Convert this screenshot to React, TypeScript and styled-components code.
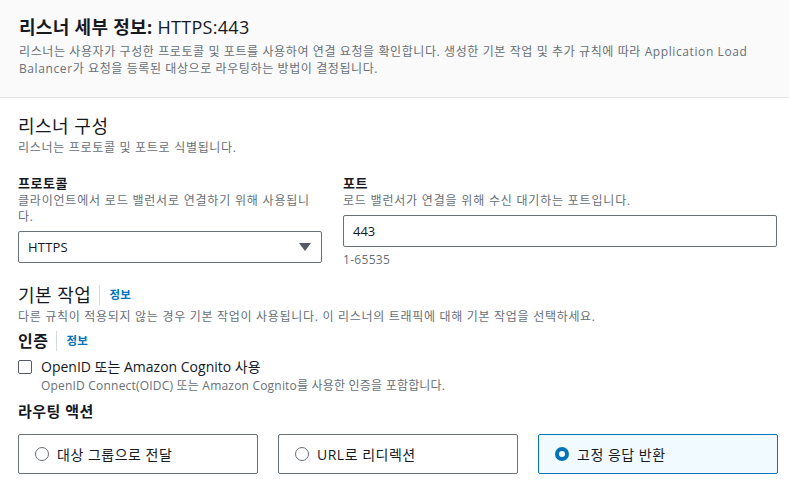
import React from "react";
import styled, { createGlobalStyle } from "styled-components";

const Global = createGlobalStyle`
  html, body { margin: 0; padding: 0; background: #ffffff; }
  body {
    font-family: "Open Sans", "Noto Sans CJK KR", "Noto Sans", sans-serif;
    color: #16191f;
    -webkit-font-smoothing: antialiased;
  }
  * { box-sizing: border-box; }
`;

const Page = styled.div`
  width: 789px;
  height: 492px;
  overflow: hidden;
  background: #ffffff;
`;

const Header = styled.header`
  background: #fafafa;
  border-bottom: 1px solid #e6e6e6;
  padding: 14px 28px 18px 19px;
  height: 98px;
`;

const Title = styled.h1`
  margin: 0;
  font-size: 18px;
  line-height: 26px;
  font-weight: 700;
  color: #16191f;
  letter-spacing: 0.3px;
  span { font-weight: 400; }
`;

const Desc = styled.p<{ $mt?: number; $ls?: number }>`
  margin: ${(p) => p.$mt ?? 0}px 0 0 0;
  font-size: 12px;
  line-height: 17px;
  letter-spacing: ${(p) => p.$ls ?? 0.7}px;
  color: #687078;
`;

const Body = styled.main`
  padding: 15px 11px 0 18px;
  display: flex;
  flex-direction: column;
`;

const SectionTitle = styled.h2<{ $bold?: boolean; $size?: number }>`
  margin: 0;
  font-size: ${(p) => p.$size ?? 18}px;
  line-height: 26px;
  font-weight: ${(p) => (p.$bold ? 700 : 400)};
  letter-spacing: 0.5px;
  color: #16191f;
  display: flex;
  align-items: center;
`;

const InfoLink = styled.a`
  display: inline-flex;
  align-items: center;
  margin-left: 8px;
  padding-left: 9px;
  border-left: 1px solid #d5dbdb;
  height: 20px;
  font-size: 11.5px;
  font-weight: 700;
  letter-spacing: 0.3px;
  color: #0073bb;
  text-decoration: none;
`;

const Columns = styled.div`
  display: grid;
  grid-template-columns: 304px 434px;
  column-gap: 21px;
  margin-top: 18px;
`;

const Field = styled.div`
  display: flex;
  flex-direction: column;
`;

const Label = styled.label`
  font-size: 13px;
  line-height: 18px;
  font-weight: 700;
  letter-spacing: 0.5px;
  color: #16191f;
`;

const FieldDesc = styled.div`
  font-size: 12px;
  line-height: 16px;
  letter-spacing: 0.8px;
  color: #687078;
  margin-top: 1px;
`;

const SelectBox = styled.div`
  margin-top: 6px;
  height: 32px;
  border: 1px solid #687078;
  border-radius: 2px;
  display: flex;
  align-items: center;
  justify-content: space-between;
  padding: 0 10px 0 9px;
  font-size: 13px;
  letter-spacing: 0.2px;
  color: #16191f;
`;

const Caret = styled.span`
  width: 0;
  height: 0;
  border-left: 6px solid transparent;
  border-right: 6px solid transparent;
  border-top: 8px solid #545b64;
`;

const InputBox = styled.div`
  margin-top: 6px;
  height: 32px;
  border: 1px solid #687078;
  border-radius: 2px;
  display: flex;
  align-items: center;
  padding: 0 9px;
  font-size: 13px;
  color: #16191f;
`;

const Hint = styled.div`
  font-size: 12px;
  line-height: 16px;
  letter-spacing: 0.3px;
  color: #687078;
  margin-top: 5px;
`;

const Section = styled.section<{ $mt: number }>`
  margin-top: ${(p) => p.$mt}px;
  display: flex;
  flex-direction: column;
`;

const CheckRow = styled.div`
  display: flex;
  align-items: flex-start;
  margin-top: 3px;
  gap: 9px;
`;

const CheckBox = styled.span`
  width: 14px;
  height: 14px;
  border: 1px solid #545b64;
  border-radius: 2px;
  margin-top: 3px;
  flex: none;
`;

const CheckText = styled.div`
  display: flex;
  flex-direction: column;
`;

const CheckLabel = styled.div`
  font-size: 14px;
  line-height: 20px;
  letter-spacing: 0;
  color: #16191f;
`;

const Tiles = styled.div`
  display: grid;
  grid-template-columns: repeat(3, 240px);
  column-gap: 20px;
  margin-top: 10px;
`;

const Tile = styled.div<{ $on?: boolean }>`
  height: 40px;
  border: 1px solid ${(p) => (p.$on ? "#0073bb" : "#687078")};
  background: ${(p) => (p.$on ? "#f1faff" : "#ffffff")};
  border-radius: 2px;
  display: flex;
  align-items: center;
  padding-left: 16px;
  gap: 8px;
  font-size: 14px;
  letter-spacing: 0.5px;
  color: #16191f;
`;

const Radio = styled.span<{ $on?: boolean }>`
  width: 14px;
  height: 14px;
  border-radius: 50%;
  flex: none;
  border: ${(p) => (p.$on ? "4px solid #0073bb" : "1px solid #687078")};
  background: #ffffff;
`;

export default function App() {
  return (
    <Page>
      <Global />
      <Header>
        <Title>
          리스너 세부 정보: <span>HTTPS:443</span>
        </Title>
        <Desc $mt={3} $ls={0.6}>
          리스너는 사용자가 구성한 프로토콜 및 포트를 사용하여 연결 요청을 확인합니다. 생성한 기본 작업 및 추가 규칙에 따라 Application Load
          Balancer가 요청을 등록된 대상으로 라우팅하는 방법이 결정됩니다.
        </Desc>
      </Header>
      <Body>
        <SectionTitle>리스너 구성</SectionTitle>
        <Desc>리스너는 프로토콜 및 포트로 식별됩니다.</Desc>
        <Columns>
          <Field>
            <Label>프로토콜</Label>
            <FieldDesc>클라이언트에서 로드 밸런서로 연결하기 위해 사용됩니다.</FieldDesc>
            <SelectBox>
              HTTPS
              <Caret />
            </SelectBox>
          </Field>
          <Field>
            <Label>포트</Label>
            <FieldDesc>로드 밸런서가 연결을 위해 수신 대기하는 포트입니다.</FieldDesc>
            <InputBox>443</InputBox>
            <Hint>1-65535</Hint>
          </Field>
        </Columns>
        <Section $mt={14}>
          <SectionTitle>
            기본 작업<InfoLink>정보</InfoLink>
          </SectionTitle>
          <Desc>다른 규칙이 적용되지 않는 경우 기본 작업이 사용됩니다. 이 리스너의 트래픽에 대해 기본 작업을 선택하세요.</Desc>
        </Section>
        <Section $mt={3}>
          <SectionTitle $bold $size={16}>
            인증<InfoLink>정보</InfoLink>
          </SectionTitle>
          <CheckRow>
            <CheckBox />
            <CheckText>
              <CheckLabel>OpenID 또는 Amazon Cognito 사용</CheckLabel>
              <Desc $ls={0.2}>OpenID Connect(OIDC) 또는 Amazon Cognito를 사용한 인증을 포함합니다.</Desc>
            </CheckText>
          </CheckRow>
        </Section>
        <Section $mt={4}>
          <SectionTitle $bold $size={15}>라우팅 액션</SectionTitle>
          <Tiles>
            <Tile>
              <Radio />
              대상 그룹으로 전달
            </Tile>
            <Tile>
              <Radio />
              URL로 리디렉션
            </Tile>
            <Tile $on>
              <Radio $on />
              고정 응답 반환
            </Tile>
          </Tiles>
        </Section>
      </Body>
    </Page>
  );
}
